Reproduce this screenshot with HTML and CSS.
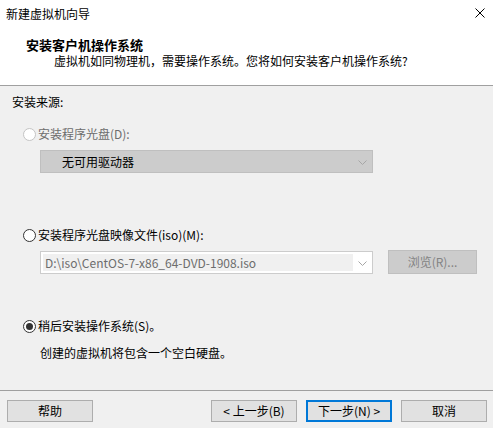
FILE: index.html
```html
<!DOCTYPE html>
<html lang="zh-CN">
<head>
<meta charset="utf-8">
<title>新建虚拟机向导</title>
<link rel="stylesheet" href="styles.css">
</head>
<body>
<div class="dialog">
  <div class="titlebar">
    <span class="title">新建虚拟机向导</span>
    <svg class="close" width="10" height="10" viewBox="0 0 10 10"><path d="M0.5 0.5 L9.5 9.5 M9.5 0.5 L0.5 9.5" stroke="#000" stroke-width="1" fill="none"/></svg>
  </div>
  <div class="header">
    <div class="heading">安装客户机操作系统</div>
    <div class="subheading">虚拟机如同物理机，需要操作系统。您将如何安装客户机操作系统?</div>
  </div>
  <div class="content">
    <div class="label">安装来源:</div>
    <div class="option option-disabled opt-disc"><span class="radio"></span><span>安装程序光盘(D):</span></div>
    <div class="combo combo-disabled">
      <span class="combo-text">无可用驱动器</span>
      <svg class="chevron" width="9" height="5" viewBox="0 0 9 5"><path d="M0.5 0.5 L4.5 4.5 L8.5 0.5" stroke="#a6a6a6" fill="none"/></svg>
    </div>
    <div class="option opt-iso"><span class="radio"></span><span>安装程序光盘映像文件(iso)(M):</span></div>
    <div class="iso-row">
      <div class="combo combo-edit">
        <span class="edit">D:\iso\CentOS-7-x86_64-DVD-1908.iso</span>
        <svg class="chevron" width="9" height="5" viewBox="0 0 9 5"><path d="M0.5 0.5 L4.5 4.5 L8.5 0.5" stroke="#a6a6a6" fill="none"/></svg>
      </div>
      <div class="browse">浏览(R)...</div>
    </div>
    <div class="option opt-later"><span class="radio checked"></span><span>稍后安装操作系统(S)。</span></div>
    <div class="desc">创建的虚拟机将包含一个空白硬盘。</div>
  </div>
  <div class="footer">
    <div class="btn">帮助</div>
    <div class="btn-group">
      <div class="btn">&lt; 上一步(B)</div>
      <div class="btn btn-default">下一步(N) &gt;</div>
      <div class="btn">取消</div>
    </div>
  </div>
</div>
</body>
</html>
```
FILE: styles.css
```css
html, body {
  margin: 0;
  padding: 0;
}
body {
  width: 493px;
  height: 428px;
  overflow: hidden;
  font-family: "Noto Sans CJK SC", "Noto Sans", sans-serif;
  font-size: 12px;
  line-height: 16px;
  color: #000;
  background: #f0f0f0;
}
.dialog {
  width: 493px;
  height: 428px;
  display: flex;
  flex-direction: column;
}
.titlebar {
  height: 28px;
  background: #fff;
  display: flex;
  align-items: center;
  justify-content: space-between;
  padding: 0 8px 0 6px;
}
.close {
  display: block;
  margin-top: -2px;
}
.header {
  height: 57px;
  background: #fff;
  border-bottom: 1px solid #a0a0a0;
  padding-top: 9px;
  box-sizing: border-box;
  height: 58px;
}
.heading {
  font-weight: bold;
  font-size: 13px;
  padding-left: 26px;
}
.subheading {
  padding-left: 54px;
}
.content {
  height: 304px;
  box-sizing: border-box;
  padding: 8px 0 0 0;
  display: flex;
  flex-direction: column;
  align-items: flex-start;
}
.label {
  padding-left: 12px;
}
.option {
  display: flex;
  align-items: center;
  gap: 2px;
  padding-left: 23px;
}
.opt-disc { margin-top: 16px; }
.opt-iso { margin-top: 54px; }
.opt-later { margin-top: 44px; }
.option-disabled {
  color: #6d6d6d;
}
.radio {
  width: 13px;
  height: 13px;
  box-sizing: border-box;
  border: 1px solid #333;
  border-radius: 50%;
  background: #fff;
  position: relative;
}
.option-disabled .radio {
  border-color: #c4c4c4;
}
.radio.checked::after {
  content: "";
  position: absolute;
  left: 2px;
  top: 2px;
  width: 7px;
  height: 7px;
  border-radius: 50%;
  background: #333;
}
.combo {
  width: 333px;
  height: 23px;
  box-sizing: border-box;
  display: flex;
  align-items: center;
  position: relative;
}
.combo .chevron {
  position: absolute;
  right: 5px;
  top: 9px;
}
.combo-disabled {
  margin: 8px 0 0 40px;
  background: #cccccc;
  border: 1px solid #bfbfbf;
  padding-left: 21px;
}
.iso-row {
  display: flex;
  align-items: center;
  margin: 7px 0 0 40px;
  gap: 15px;
}
.combo-edit {
  background: #fff;
  border: 1px solid #cccccc;
  padding: 2px;
}
.edit {
  width: 310px;
  height: 17px;
  background: #f0f0f0;
  color: #6d6d6d;
  padding-left: 2px;
  box-sizing: border-box;
  line-height: 17px;
  white-space: nowrap;
  overflow: hidden;
}
.browse {
  width: 89px;
  height: 24px;
  box-sizing: border-box;
  background: #cccccc;
  border: 1px solid #bfbfbf;
  color: #838383;
  display: flex;
  align-items: center;
  justify-content: center;
}
.desc {
  margin-top: 11px;
  padding-left: 40px;
}
.footer {
  border-top: 1px solid #a0a0a0;
  display: flex;
  justify-content: space-between;
  align-items: flex-start;
  padding: 9px 6px 0 7px;
}
.btn-group {
  display: flex;
  gap: 9px;
}
.btn {
  width: 86px;
  height: 22px;
  box-sizing: border-box;
  background: #e1e1e1;
  border: 1px solid #adadad;
  display: flex;
  align-items: center;
  justify-content: center;
}
.btn-default {
  border: 2px solid #0078d7;
}
```
